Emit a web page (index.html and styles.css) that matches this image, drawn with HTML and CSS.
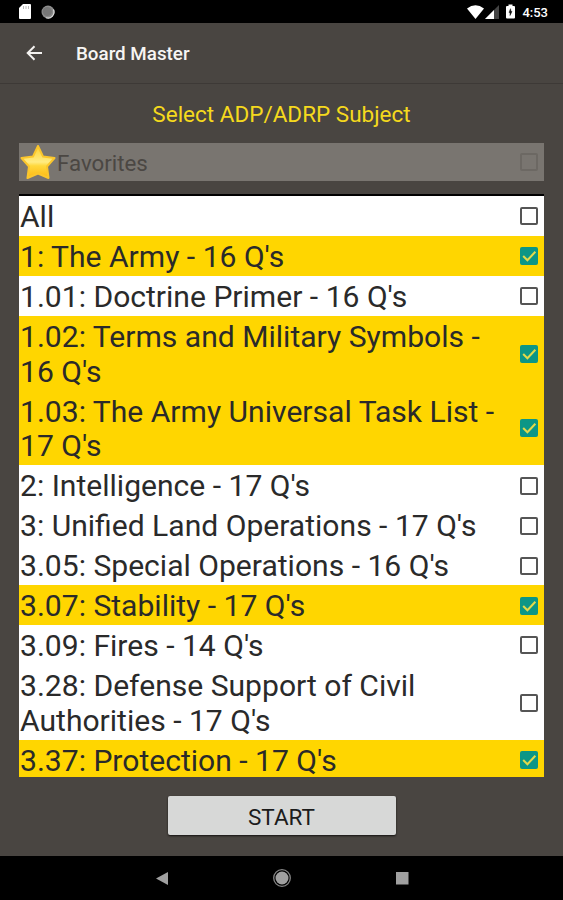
FILE: index.html
```html
<!DOCTYPE html>
<html lang="en">

<head>
  <meta charset="UTF-8" />
  <meta name="viewport" content="width=device-width, initial-scale=1.0" />
  <title>Board Master</title>
  <link rel="stylesheet" href="styles.css">
</head>

<body>
  <div class="status-bar">
    <svg class="sd-icon" viewBox="0 0 12 15"><path d="M4 0h7q1 0 1 1v13q0 1-1 1H1q-1 0-1-1V4z" fill="#fff" /><path d="M4.5 2v3M7 2v3M9.5 2v3" stroke="#bbb" /></svg>
    <svg class="sync-icon" viewBox="0 0 14 14"><circle cx="7" cy="7" r="6.5" fill="#8c8c8c" /><circle cx="6.3" cy="6.5" r="4.6" fill="#777" /><path d="M12.4 4.5A6 6 0 0 1 5 12.7" fill="none" stroke="#ddd" stroke-width="1.2" /></svg>
    <span class="spacer"></span>
    <svg class="wifi-icon" viewBox="0 0 17 14"><path d="M0 3.5Q8.5-3 17 3.5L8.5 14z" fill="#fff" /></svg>
    <svg class="signal-icon" viewBox="0 0 14 14"><path d="M14 0v14H0z" fill="#444" /><path d="M9 5v9H0z" fill="#fff" /></svg>
    <svg class="battery-icon" viewBox="0 0 9 14"><path d="M2.5 0h4v1.5H8q1 0 1 1V13q0 1-1 1H1q-1 0-1-1V2.500q0-1 1-1h1.500z" fill="#fff" /><path d="M4.500 4.200L3 8H4V11l2-4H5z" fill="#111" stroke="#111" stroke-width="0.500" /></svg>
    <span class="clock">4:53</span>
  </div>

  <div class="app-bar">
    <svg class="back-icon" viewBox="0 0 16 16"><path d="M15.500 8H1.500M8 1.200L1.200 8L8 14.800" fill="none" stroke="#f4f2f0" stroke-width="2" /></svg>
    <h1>Board Master</h1>
  </div>

  <main>
    <h2>Select ADP/ADRP Subject</h2>

    <div class="favorites">
      <svg class="star" viewBox="0 0 36 34">
        <defs>
          <linearGradient id="gold" x1="0" y1="0" x2="0" y2="1">
            <stop offset="0" stop-color="#ffd12e" />
            <stop offset="0.500" stop-color="#ffec83" />
            <stop offset="0.620" stop-color="#ffd83c" />
            <stop offset="1" stop-color="#fdb813" />
          </linearGradient>
        </defs>
        <path d="M18 1L23 11.500L34.500 13L27 21.500L28.500 33L18 28.500L7.500 33L9 21.500L1.500 13L13 11.500z" fill="url(#gold)" stroke="#fbc62c" stroke-width="2" stroke-linejoin="round" />
      </svg>
      <span>Favorites</span>
      <i class="box"></i>
    </div>

    <ul class="subjects" id="subjects"></ul>

    <button class="start">START</button>
  </main>

  <div class="nav-bar">
    <svg viewBox="0 0 20 20"><path d="M16 4v13L4 10.500z" fill="#a0a0a0" /></svg>
    <svg viewBox="0 0 20 20"><circle cx="10" cy="10" r="8.300" fill="none" stroke="#858585" stroke-width="1.300" /><circle cx="10" cy="10" r="6.500" fill="#a0a0a0" /></svg>
    <svg viewBox="0 0 20 20"><path d="M4 4h12.500v12.500H4z" fill="#a0a0a0" /></svg>
  </div>

  <script>
    const subjects = [
      { name: "All", checked: false },
      { name: "1: The Army - 16 Q's", checked: true },
      { name: "1.01: Doctrine Primer - 16 Q's", checked: false },
      { name: "1.02: Terms and Military Symbols - 16 Q's", checked: true },
      { name: "1.03: The Army Universal Task List - 17 Q's", checked: true },
      { name: "2: Intelligence - 17 Q's", checked: false },
      { name: "3: Unified Land Operations - 17 Q's", checked: false },
      { name: "3.05: Special Operations - 16 Q's", checked: false },
      { name: "3.07: Stability - 17 Q's", checked: true },
      { name: "3.09: Fires - 14 Q's", checked: false },
      { name: "3.28: Defense Support of Civil Authorities - 17 Q's", checked: false },
      { name: "3.37: Protection - 17 Q's", checked: true }
    ];
    const list = document.getElementById('subjects');
    const tick = '<svg viewBox="0 0 17 17"><path d="M3 8.500l4 4L14.500 4.500" fill="none" stroke="#e3d94b" stroke-width="1.900" /></svg>';

    function loadSubjects() {
      list.innerHTML = '';
      subjects.forEach(item => {
        const row = document.createElement('li');
        row.classList.toggle('checked', item.checked);
        row.innerHTML = `<span>${item.name}</span><i class="box">${item.checked ? tick : ''}</i>`;
        row.onclick = () => {
          item.checked = !item.checked;
          loadSubjects();
        };
        list.appendChild(row);
      });
    }

    loadSubjects();
  </script>
</body>

</html>
```
FILE: styles.css
```css
* {
  box-sizing: border-box;
}

body {
  margin: 0;
  height: 900px;
  display: flex;
  flex-direction: column;
  overflow: hidden;
  background: #494541;
  font-family: Roboto, sans-serif;
}

.status-bar {
  height: 23px;
  flex: none;
  display: flex;
  align-items: center;
  padding: 0 15px 0 19px;
  background: #000;
  color: #fff;
}

.sd-icon {
  width: 12px;
  height: 15px;
  margin-right: 10px;
}

.sync-icon {
  width: 14px;
  height: 14px;
}

.spacer {
  flex: 1;
}

.wifi-icon {
  width: 17px;
  height: 14px;
  margin-right: 1px;
}

.signal-icon {
  width: 14px;
  height: 14px;
  margin-right: 7px;
}

.battery-icon {
  width: 9px;
  height: 15px;
  margin-right: 7px;
}

.clock {
  font-size: 13px;
  font-weight: 500;
  line-height: 23px;
  padding-top: 2px;
}

.app-bar {
  height: 61px;
  flex: none;
  display: flex;
  align-items: center;
  padding-left: 26px;
  border-bottom: 1px solid #3d3936;
}

.back-icon {
  width: 17px;
  height: 16px;
  margin-right: 33px;
}

h1 {
  margin: 1px 0 0;
  color: #f7f5f3;
  font-size: 18.800px;
  font-weight: 500;
}

main {
  flex: 1;
  display: flex;
  flex-direction: column;
  padding: 0 19px;
}

h2 {
  margin: 17px 0 15px;
  color: #f5d91d;
  font-size: 22.500px;
  font-weight: 400;
  line-height: 27px;
  text-align: center;
}

.favorites {
  height: 38px;
  display: flex;
  align-items: center;
  padding-right: 6px;
  background: #797570;
  color: #4b4743;
  font-size: 22.300px;
}

.favorites span {
  flex: 1;
  padding-top: 2px;
}

.star {
  width: 36px;
  height: 34px;
  margin: 0 1px;
}

.box {
  width: 18px;
  height: 18px;
  flex: none;
  border: 2px solid #555;
  border-radius: 2px;
}

.favorites .box {
  border-color: #6c6863;
}

.subjects {
  height: 583px;
  margin: 13px 0 0;
  padding: 0;
  overflow: hidden;
  list-style: none;
  border-top: 2px solid #000;
  background: #fff;
  color: #2a2a2a;
  font-size: 30.080px;
  line-height: 34.900px;
}

.subjects li {
  display: flex;
  align-items: center;
  padding: 2px 6px 1px 1px;
  cursor: pointer;
}

.subjects span {
  flex: 1;
  padding: 2px 20px 0 0;
}

.subjects .checked {
  background: #ffd600;
}

.checked .box {
  border: none;
  background: #0c9686;
}

.box svg {
  display: block;
}

.start {
  width: 228px;
  height: 39px;
  margin: 19px auto 0;
  padding: 2px 0 0;
  border: none;
  border-radius: 2px;
  background: #d7d8d7;
  box-shadow: 0 1px 2px #161412;
  color: #1c1c1c;
  font-family: inherit;
  font-size: 22.500px;
}

.nav-bar {
  height: 44px;
  flex: none;
  display: flex;
  justify-content: center;
  align-items: center;
  gap: 100px;
  background: #000;
}

.nav-bar svg {
  width: 20px;
  height: 20px;
}
```
